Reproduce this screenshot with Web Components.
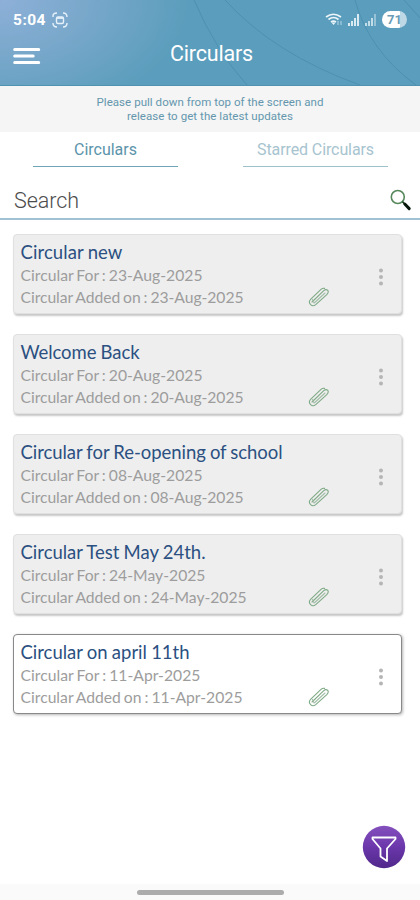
<!DOCTYPE html>
<html lang="en"><head><meta charset="utf-8"><title>Circulars</title>
<style>
html,body{margin:0;height:100%;background:#fff;overflow:hidden}
body{font-family:Roboto,"Liberation Sans",sans-serif}
</style></head><body>
<circulars-app></circulars-app>
<script>
const define=(name,html,setup)=>customElements.define(name,class extends HTMLElement{
  constructor(){super();this.attachShadow({mode:'open'}).innerHTML=html;}
  connectedCallback(){if(setup)setup(this,this.shadowRoot);}
});

// Text run whose tracking is adjusted to span a given advance width.
define('fit-text','<style>:host{display:inline-block;white-space:pre}</style><span></span>',(el,root)=>{
  const s=root.querySelector('span');s.textContent=el.getAttribute('text');
  const w=s.getBoundingClientRect().width,t=+el.getAttribute('width');
  if(t&&w)s.style.letterSpacing=((t-w)/s.textContent.length)+'px';
});

define('app-header',`<style>
:host{display:block;height:86px;box-sizing:border-box;position:relative;color:#fff;border-bottom:1px solid #4f93b0;
 background:radial-gradient(ellipse 190px 120px at 0 0,#8eb0d8 0,#79a8cb 45%,#5b9dbc00 100%),#5b9dbc}
.lines{position:absolute;inset:0}
.status{position:relative;height:39px;display:grid;grid-template-columns:39px 1fr auto;align-items:center;padding:0 13px 0 13px}
.time{font-size:15.5px;font-weight:700}
.left{height:16px}
.right{display:flex;align-items:center;gap:6px}
.right svg:first-child{margin-right:-2px}
.pill{width:25px;height:17px;border-radius:9px;background:linear-gradient(90deg,#fff 71%,#bfd8e5 71%);color:#6a9cb6;font-size:13px;font-weight:700;display:grid;place-items:center;line-height:17px}
.bar{position:relative;height:34px;display:grid;grid-template-columns:157px 1fr;align-items:center;padding-left:13px}
.title{font-size:21.5px;line-height:30px;margin-top:-4px}
svg{display:block}
</style>
<svg class="lines" width="420" height="85" fill="none" stroke="#397f9f" stroke-opacity=".42"><path d="M194 0Q216 51 247 85M225 0Q274 54 360 85M355 0Q369 51 416 85M404 0L420 18"/></svg>
<div class="status"><fit-text class="time" text="5:04" width="33"></fit-text>
<div class="left"><svg width="16" height="16" viewBox="0 0 16 16" fill="none" stroke="#e6f1fa" stroke-width="1.4"><path d="M1 5V4Q1 1 5 1M11 1Q15 1 15 5M15 11Q15 15 11 15M5 15Q1 15 1 11"/><rect x="4.5" y="5" width="7" height="6.5" rx="1.5"/><path d="M5 6h6" stroke-width="1.8"/></svg></div>
<div class="right"><svg width="19" height="14" viewBox="-1 0 19 14" fill="none" stroke="#edf6fa" stroke-width="1.6"><path d="M0 4Q7.5 -1.5 15 4M2.5 6.5Q7.5 2.6 12.5 6.5M5 9Q7.5 7.2 10 9"/><path d="M5.5 9.5L7.5 12L9.5 9.5Z" fill="#edf6fa" stroke="none"/><path d="M12 8v4M15 8v4" stroke="#9cc7dc" stroke-width="1.4"/></svg>
<svg width="11" height="12" viewBox="0 0 11 12" fill="#d9eaf2"><path d="M0 9h2v3H0M3 7h2v5H3M6 4h2v8H6M9 0h2v12H9"/></svg>
<svg width="11" height="12" viewBox="0 0 11 12" fill="#c2dce8"><path d="M0 9h2v3H0M3 7h2v5H3M6 4h2v8H6"/><path d="M9 0h2v12H9" opacity=".6"/></svg>
<div class="pill">71</div></div></div>
<div class="bar"><svg width="28" height="18" viewBox="0 0 28 18" stroke="#fff" stroke-width="3" stroke-linecap="round"><path d="M1.7 2.5h24M1.7 9h18.5M1.7 15.5h24"/></svg><fit-text class="title" text="Circulars" width="83"></fit-text></div>`);

define('update-notice',`<style>:host{display:flex;flex-direction:column;align-items:center;height:46px;box-sizing:border-box;background:#f5f5f5;padding-top:10px;font-size:11.5px;line-height:13.5px;color:#6497ae}</style>
<fit-text text="Please pull down from top of the screen and" width="227"></fit-text><fit-text text="release to get the latest updates" width="166"></fit-text>`);

define('tab-item',`<style>:host{display:flex;justify-content:center;width:145px;height:35px;box-sizing:border-box;border-bottom:1.5px solid #6ea6b7;color:#5b94aa;font-size:16px;line-height:35px}
:host([muted]){color:#a7c4cf;border-color:#9fc1ca}</style><slot></slot>`);

define('search-bar',`<style>:host{display:flex;justify-content:space-between;align-items:center;height:53px;box-sizing:border-box;border-bottom:2px solid #a1c2d2;padding:15px 8px 0 14px;color:#4c4c4c;font-size:21.5px;font-weight:300}svg{display:block}</style>
<fit-text text="Search" width="65"></fit-text>
<svg width="22" height="22" viewBox="0 0 22 22" fill="none"><circle cx="7.8" cy="8" r="6.5" stroke="#55885b" stroke-width="1.6"/><path d="M12.4 12.6l2 2" stroke="#173f1e" stroke-width="1.5"/><path d="M14.8 15l4.4 4.6" stroke="#07170b" stroke-width="3" stroke-linecap="round"/></svg>`);

define('circular-card',`<style>
:host{display:grid;grid-template-columns:1fr 22px 46px 12px;height:80px;width:389px;box-sizing:border-box;background:#eee;border:1px solid #e0e0e0;border-radius:4px;box-shadow:1px 2px 2px #c8c8c8;padding:5px 13px 0 6.5px;font-family:Lato,sans-serif;color:#9d9d9d}
:host([unread]){background:#fff;border-color:#898989;box-shadow:1px 1px 3px #b5b5b5}
.body{display:flex;flex-direction:column;align-items:flex-start;min-width:0}
.title{font-size:18.5px;line-height:24px;color:#2b5081;word-spacing:-.5px}
.meta{font-size:15.7px;line-height:22px;word-spacing:-1px}
.clip{align-self:end;padding-bottom:6px}.dots{grid-column:4;align-self:start;padding:28px 0 0 1.5px}
svg{display:block}
</style><div class="body"><fit-text class="title"></fit-text><fit-text class="meta f"></fit-text><fit-text class="meta a"></fit-text></div>
<svg class="clip" width="22" height="20" viewBox="0 0 22 20" fill="none" stroke-linecap="round" stroke-linejoin="round" stroke-width="1.1"><path d="M4 15L15.5 3.8Q18 1.6 19.8 3.4Q21 5 18.8 7.6L8 17.4Q5 20 2.6 17.6Q0 15 2.8 12.2L13 2.4Q14.6 1 16.6 1.4" stroke="#7faa86"/><path d="M6.8 15.5L17 6M4.5 12.5l1.6 3.6" stroke="#a3bea8"/></svg>
<svg class="dots" width="7" height="18" viewBox="0 0 7 18" fill="#b5b5b5"><circle cx="3.5" cy="2.5" r="2"/><circle cx="3.5" cy="9" r="2"/><circle cx="3.5" cy="15.5" r="2"/></svg>`,(el,root)=>{
 const w=el.getAttribute('widths').split(' '),d=el.getAttribute('date');
 [el.getAttribute('heading'),'Circular For : '+d,'Circular Added on : '+d].forEach((t,i)=>{
  const f=root.querySelectorAll('fit-text')[i],n=document.createElement('fit-text');
  n.className=f.className;n.setAttribute('text',t);n.setAttribute('width',w[i]);f.replaceWith(n);
 });
});

define('filter-button',`<style>:host{display:block;width:44px;height:44px}svg{display:block}</style>
<svg width="44" height="44" viewBox="0 0 44 44"><defs><linearGradient id="g" x2="0" y2="1"><stop stop-color="#8450bd"/><stop offset=".5" stop-color="#6b37ab"/><stop offset="1" stop-color="#50288b"/></linearGradient></defs><circle cx="22" cy="22" r="21.2" fill="url(#g)"/><path d="M10.5 12.5H33.5V14L25 23.5V36L18.5 31.5V23.5L10.5 14Z" fill="none" stroke="#fff" stroke-width="1.8" stroke-linejoin="round"/></svg>`);

define('circulars-app',`<style>
:host{display:flex;flex-direction:column;width:420px;height:900px;background:#fff}
nav{display:flex;justify-content:space-between;padding:0 32px 0 33px}
main{display:flex;flex-direction:column;gap:19.9px;padding:14px 0 0 13px}
.action{margin:auto 14px 15px auto}
footer{height:16px;background:#fafafa;display:flex;justify-content:center;align-items:center}
footer i{width:147px;height:5px;border-radius:3px;background:#acacac}
</style><app-header></app-header><update-notice></update-notice>
<nav><tab-item><fit-text text="Circulars" width="63"></fit-text></tab-item><tab-item muted><fit-text text="Starred Circulars" width="117"></fit-text></tab-item></nav>
<search-bar></search-bar>
<main>
<circular-card heading="Circular new" date="23-Aug-2025" widths="102 182 223"></circular-card>
<circular-card heading="Welcome Back" date="20-Aug-2025" widths="119 182 223"></circular-card>
<circular-card heading="Circular for Re-opening of school" date="08-Aug-2025" widths="262 182 223"></circular-card>
<circular-card heading="Circular Test May 24th." date="24-May-2025" widths="185 185 226"></circular-card>
<circular-card unread heading="Circular on april 11th" date="11-Apr-2025" widths="169 180 222"></circular-card>
</main><filter-button class="action"></filter-button><footer><i></i></footer>`);
</script></body></html>
